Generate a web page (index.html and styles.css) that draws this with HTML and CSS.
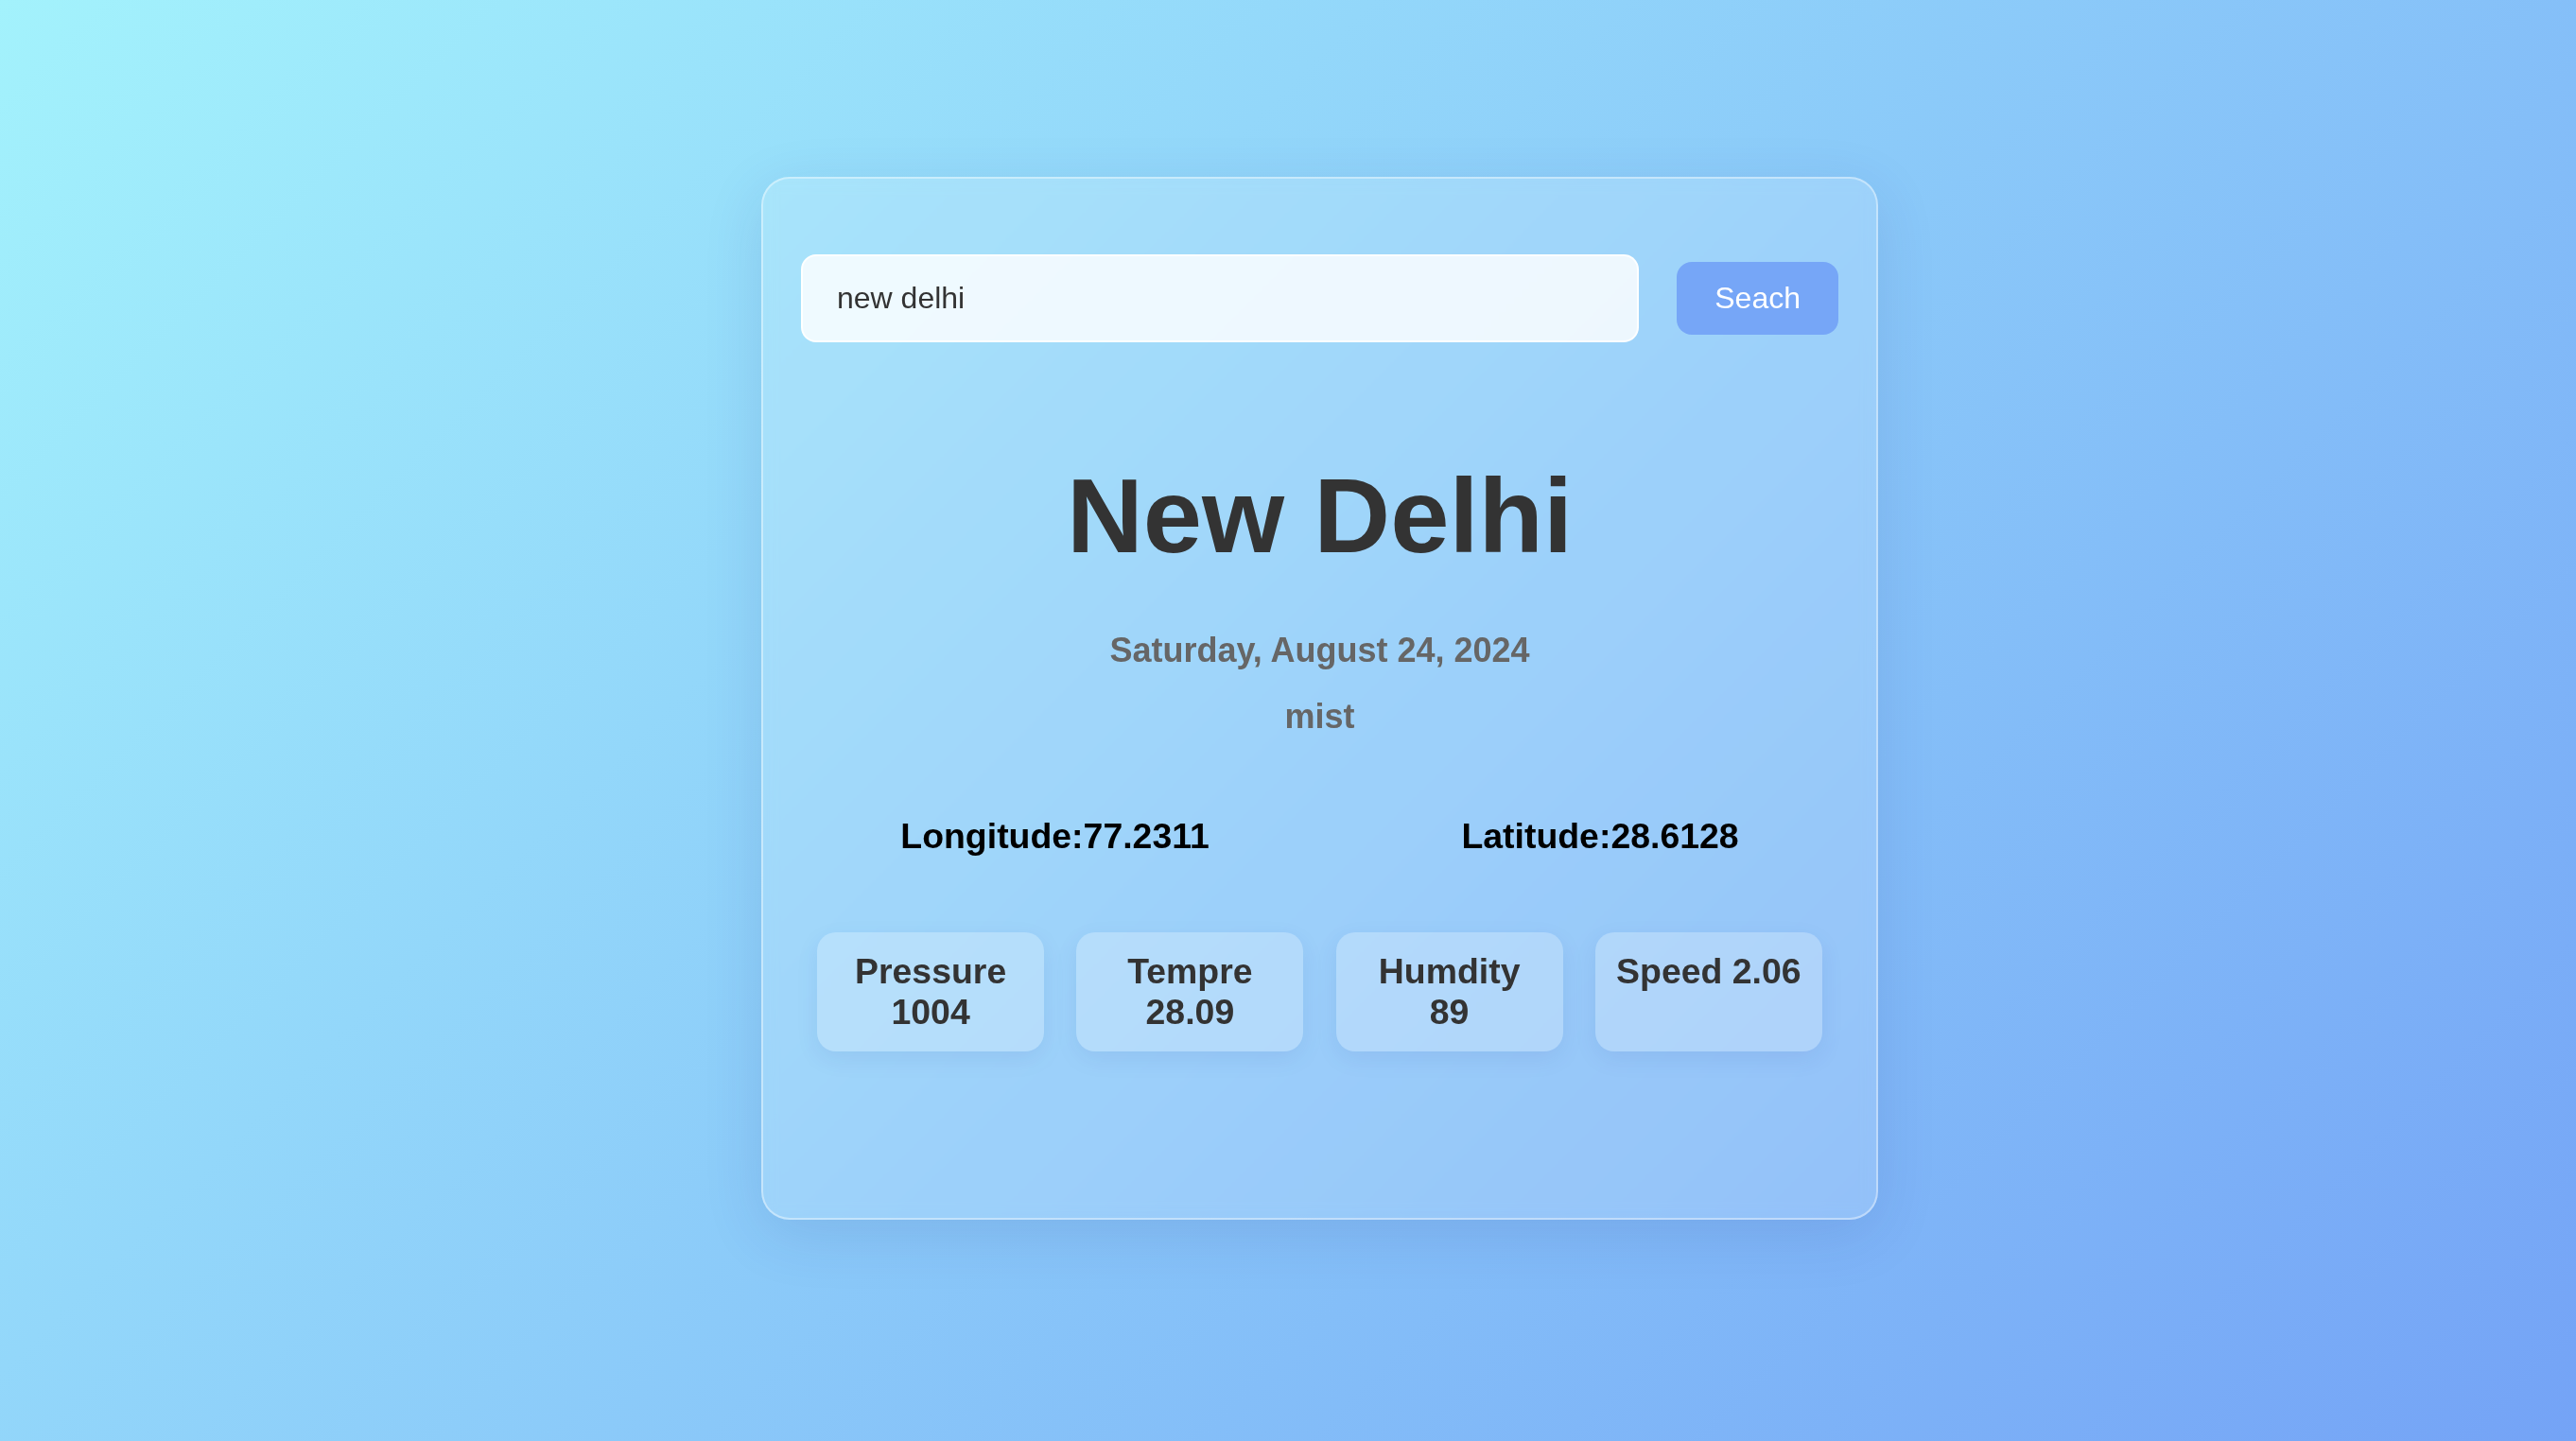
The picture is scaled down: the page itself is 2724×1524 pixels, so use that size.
FILE: index.html
```html
<!DOCTYPE html>
<html lang="en">
<head>
  <meta charset="UTF-8">
  <title>Weather App</title>
  <meta name="viewport" content="width=device-width, initial-scale=1.0">
  <link rel="stylesheet" href="styles.css">
</head>
<body>

  <div class="weather-card">
    <div class="search-box">
      <input class="search-input" type="text" value="new delhi" />
      <button class="search-btn">Seach</button>
    </div>

    <h1 class="city">New Delhi</h1>
    <p class="date">Saturday, August 24, 2024</p>
    <p class="desc">mist</p>

    <div class="coords">
      <h3>Longitude:77.2311</h3>
      <h3>Latitude:28.6128</h3>
    </div>

    <div class="details">
      <div class="detail-box"><h3>Pressure 1004</h3></div>
      <div class="detail-box"><h3>Tempre 28.09</h3></div>
      <div class="detail-box"><h3>Humdity 89</h3></div>
      <div class="detail-box"><h3>Speed 2.06</h3></div>
    </div>
  </div>

</body>
</html>
```

FILE: styles.css
```css
:root {
  --bg-gradient: linear-gradient(135deg, #a3f2fc, #74a3f6);
  --glass-bg: rgba(255, 255, 255, 0.16);
  --glass-border: rgba(255, 255, 255, 0.4);
  --btn-color: #76a6f7;
  --text-dark: #333333;
  --text-muted: #666666;
}

* {
  margin: 0;
  padding: 0;
  box-sizing: border-box;
}

body {
  font-family: 'Liberation Sans', Arial, Helvetica, sans-serif;
  background: var(--bg-gradient);
  min-height: 100vh;
  padding: 187px 0 0 67px;
}

/* Card */
.weather-card {
  width: 1181px;
  height: 1103px;
  margin: 0 auto;
  padding: 40px;
  border: 2px solid var(--glass-border);
  border-radius: 30px;
  background: var(--glass-bg);
  box-shadow: 0 16px 64px rgba(31, 38, 135, 0.12);
  backdrop-filter: blur(8px);
  display: flex;
  flex-direction: column;
  align-items: stretch;
  text-align: center;
}

/* Search */
.search-box {
  display: flex;
  align-items: center;
  gap: 40px;
  margin-top: 40px;
}

.search-input {
  flex: 1;
  height: 93px;
  padding: 0 36px;
  font-family: inherit;
  font-size: 32px;
  color: var(--text-dark);
  background: rgba(255, 255, 255, 0.82);
  border: 2px solid rgba(255, 255, 255, 0.9);
  border-radius: 16px;
  outline: none;
}

.search-btn {
  padding: 20px 40px;
  font-family: inherit;
  font-size: 32px;
  line-height: 37px;
  color: #fff;
  background: var(--btn-color);
  border: none;
  border-radius: 16px;
  cursor: pointer;
}

/* Main info */
.city {
  font-size: 112px;
  line-height: 129px;
  font-weight: 700;
  color: var(--text-dark);
  margin-top: 119px;
}

.date,
.desc {
  font-size: 36px;
  line-height: 41px;
  font-weight: 700;
  color: var(--text-muted);
}

.date {
  margin-top: 57px;
}

.desc {
  margin-top: 29px;
}

.coords {
  display: flex;
  justify-content: space-around;
  margin: 85px -28px 0;
}

.coords h3 {
  font-size: 37.44px;
  line-height: 43px;
  color: #000;
}

/* Detail boxes */
.details {
  display: flex;
  justify-content: space-around;
  margin-top: 80px;
}

.detail-box {
  width: 240px;
  padding: 20px 21px;
  border-radius: 20px;
  background: rgba(255, 255, 255, 0.24);
  box-shadow: 0 8px 24px rgba(31, 38, 135, 0.08);
}

.detail-box h3 {
  font-size: 37.44px;
  line-height: 43px;
  color: var(--text-dark);
}
```
